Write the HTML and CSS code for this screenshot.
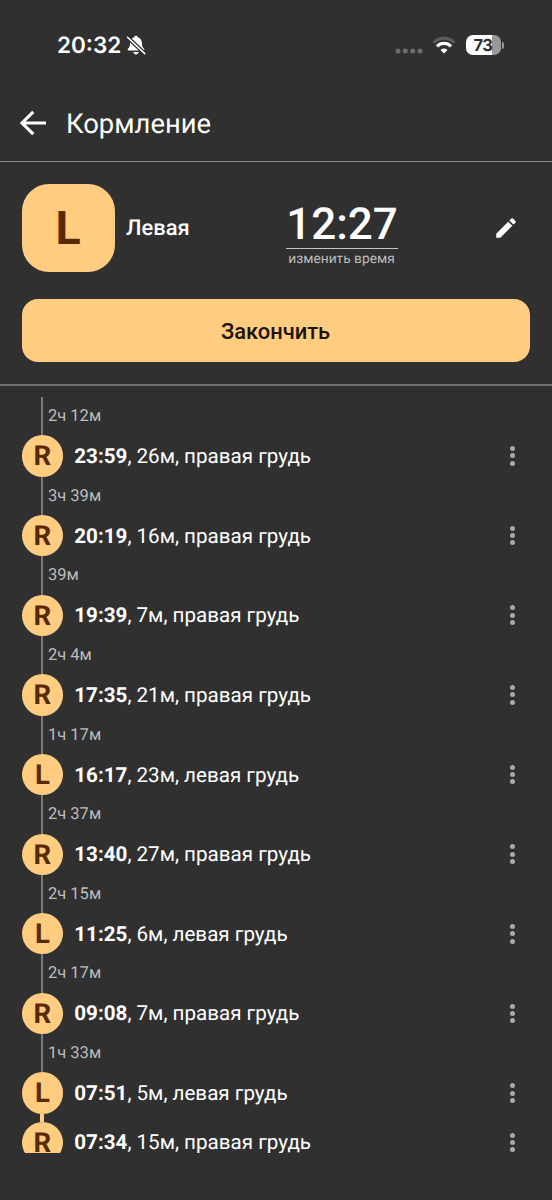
FILE: index.html
```html
<!DOCTYPE html>
<html lang="ru">
<head>
<meta charset="utf-8">
<title>Кормление</title>
<link rel="stylesheet" href="styles.css">
</head>
<body>
<div class="screen">
  <div class="status">
    <span class="clock">20:32</span>
    <svg class="bell" width="20" height="20" viewBox="0 0 20 20"><path fill="#fff" d="M10 .8c1 0 1.700.6 1.800 1.400 2.600.8 4 3 4.100 5.700.1 3.200.7 4.400 2 5.700.8.900.5 2-.7 2H2.800c-1.200 0-1.500-1.100-.7-2 1.300-1.300 1.900-2.500 2-5.700.1-2.700 1.500-4.900 4.100-5.700C8.300 1.400 9 .8 10 .8zM7.300 17h5.400c-.3 1.500-1.300 2.500-2.700 2.500S7.600 18.500 7.300 17z"/><path stroke="#303030" stroke-width="4" d="M1.500 2.200 18.800 18.600"/><path stroke="#fff" stroke-width="1.500" stroke-linecap="round" d="M1.500 2.200 18.800 18.600"/></svg>
    <svg class="signal" width="28" height="6" viewBox="0 0 28 6"><g fill="#6d6d6d"><circle cx="3" cy="3" r="2.500"/><circle cx="10.300" cy="3" r="2.500"/><circle cx="17.700" cy="3" r="2.500"/><circle cx="25" cy="3" r="2.500"/></g></svg>
    <svg class="wifi" width="24" height="18" viewBox="0 0 24 18"><g fill="none"><path stroke="#5c5c5c" stroke-width="3" d="M1.600 6.600a14.800 14.800 0 0 1 20.800 0"/><path stroke="#fff" stroke-width="3.200" d="M5 10.300a9.900 9.900 0 0 1 14 0"/></g><path fill="#fff" d="M12 17.600 8.500 14a5 5 0 0 1 7 0z"/></svg>
    <span class="battery">73</span>
    <span class="battery-tip"></span>
  </div>

  <header class="bar">
    <svg width="28" height="28" viewBox="0 0 28 28"><path fill="none" stroke="#fff" stroke-width="3.100" d="M27 14H3M14.300 2.800 3 14l11.300 11.200"/></svg>
    <h1>Кормление</h1>
  </header>

  <section class="current">
    <div class="session">
      <div class="side">L</div>
      <div class="side-name">Левая</div>
      <div class="timer"><div class="time">12:27</div><div class="hint">изменить время</div></div>
      <svg class="edit" width="26" height="26" viewBox="0 0 24 24"><path fill="#fff" d="M3 17.250V21h3.750L17.810 9.940l-3.750-3.750zM20.710 7.040a1 1 0 0 0 0-1.410l-2.340-2.340a1 1 0 0 0-1.410 0l-1.830 1.830 3.750 3.750z"/></svg>
    </div>
    <button class="finish">Закончить</button>
  </section>

  <main class="log">
    <div class="gap">2ч 12м</div>
    <div class="entry"><span class="badge">R</span><p><b>23:59</b>, 26м, правая грудь</p><span class="dots"><i></i><i></i><i></i></span></div>
    <div class="gap">3ч 39м</div>
    <div class="entry"><span class="badge">R</span><p><b>20:19</b>, 16м, правая грудь</p><span class="dots"><i></i><i></i><i></i></span></div>
    <div class="gap">39м</div>
    <div class="entry"><span class="badge">R</span><p><b>19:39</b>, 7м, правая грудь</p><span class="dots"><i></i><i></i><i></i></span></div>
    <div class="gap">2ч 4м</div>
    <div class="entry"><span class="badge">R</span><p><b>17:35</b>, 21м, правая грудь</p><span class="dots"><i></i><i></i><i></i></span></div>
    <div class="gap">1ч 17м</div>
    <div class="entry"><span class="badge">L</span><p><b>16:17</b>, 23м, левая грудь</p><span class="dots"><i></i><i></i><i></i></span></div>
    <div class="gap">2ч 37м</div>
    <div class="entry"><span class="badge">R</span><p><b>13:40</b>, 27м, правая грудь</p><span class="dots"><i></i><i></i><i></i></span></div>
    <div class="gap">2ч 15м</div>
    <div class="entry"><span class="badge">L</span><p><b>11:25</b>, 6м, левая грудь</p><span class="dots"><i></i><i></i><i></i></span></div>
    <div class="gap">2ч 17м</div>
    <div class="entry"><span class="badge">R</span><p><b>09:08</b>, 7м, правая грудь</p><span class="dots"><i></i><i></i><i></i></span></div>
    <div class="gap">1ч 33м</div>
    <div class="entry"><span class="badge">L</span><p><b>07:51</b>, 5м, левая грудь</p><span class="dots"><i></i><i></i><i></i></span></div>
    <div class="link"></div>
    <div class="entry"><span class="badge">R</span><p><b>07:34</b>, 15м, правая грудь</p><span class="dots"><i></i><i></i><i></i></span></div>
  </main>
</div>
</body>
</html>
```
FILE: styles.css
```css
* { box-sizing: border-box; }
body { margin: 0; background: #303030; color: #fff; font-family: Roboto, sans-serif; text-rendering: geometricPrecision; }
.screen { width: 552px; height: 1200px; overflow: hidden; background: #303030; }

.status { height: 86px; padding: 4px 48px 0 57px; display: flex; align-items: center; }
.clock { font: 600 22.500px/28px Inter, sans-serif; width: 65px; margin-top: 2px; white-space: nowrap; }
.bell { margin-left: 4px; }
.signal { margin: 11px 9px 0 auto; }
.wifi { margin-right: 10px; }
.battery { width: 35px; height: 20px; border-radius: 7px; background: linear-gradient(90deg, #fff 73%, #999 73%); color: #303030; font: 700 16.500px/20px Inter, sans-serif; letter-spacing: -0.5px; text-align: center; text-indent: -1px; }
.battery-tip { width: 2px; height: 7px; border-radius: 0 3px 3px 0; margin-left: 1px; background: #999; }

.bar { height: 76px; padding: 0 0 1px 19px; display: flex; align-items: center; gap: 19px; border-bottom: 1.500px solid #8a8a8a; }
.bar h1 { margin: 1px 0 0; font-size: 27.400px; font-weight: 400; line-height: 36px; }

.current { height: 224px; padding: 22px 22px 0; border-bottom: 2px solid #707070; }
.session { height: 88px; display: flex; align-items: center; }
.side { width: 93px; height: 88px; border-radius: 27px; background: #ffcc80; color: #572b00; font-size: 46.500px; font-weight: 700; line-height: 91px; text-align: center; text-indent: -1px; }
.side-name { margin: 2px 0 0 11px; width: 160px; font-size: 21.900px; line-height: 28px; font-weight: 500; }
.timer { width: 112px; margin-top: 9px; text-align: center; }
.time { height: 51px; border-bottom: 1.500px solid #c4c4c4; font-size: 44px; font-weight: 500; line-height: 53px; }
.hint { padding-right: 1px; font-size: 13.750px; line-height: 20px; height: 18px; color: #bdbdbd; white-space: nowrap; }
.edit { margin-left: auto; margin-right: 11px; }
.finish { display: block; width: 508px; height: 63px; margin-top: 27.400px; padding: 2px 1px 0 0; border: 0; border-radius: 16px; background: #ffcc80; color: #1c1308; font: 500 21.900px/61px Roboto, sans-serif; }

.log { height: 767px; padding: 11px 22px 0; overflow: hidden; }
.gap { height: 38.300px; margin-left: 19px; padding-left: 5px; border-left: 2px solid #7a7a7a; font-size: 16.500px; line-height: 40px; color: #bdbdbd; }
.entry { height: 41.350px; display: flex; align-items: center; }
.badge { width: 41.300px; height: 41.300px; border-radius: 50%; background: #ffcc80; color: #572b00; font-size: 27.500px; font-weight: 700; line-height: 41.500px; text-align: center; text-indent: -0.5px; }
.entry p { margin: 2px 0 0 11px; font-size: 20.600px; line-height: 28px; white-space: nowrap; }
.dots { margin-left: auto; margin-right: 15px; display: flex; flex-direction: column; gap: 2.300px; }
.dots i { width: 5px; height: 5px; border-radius: 50%; background: #aaa; }
.link { width: 4px; height: 8px; margin-left: 18px; background: #ffcc80; }
```
